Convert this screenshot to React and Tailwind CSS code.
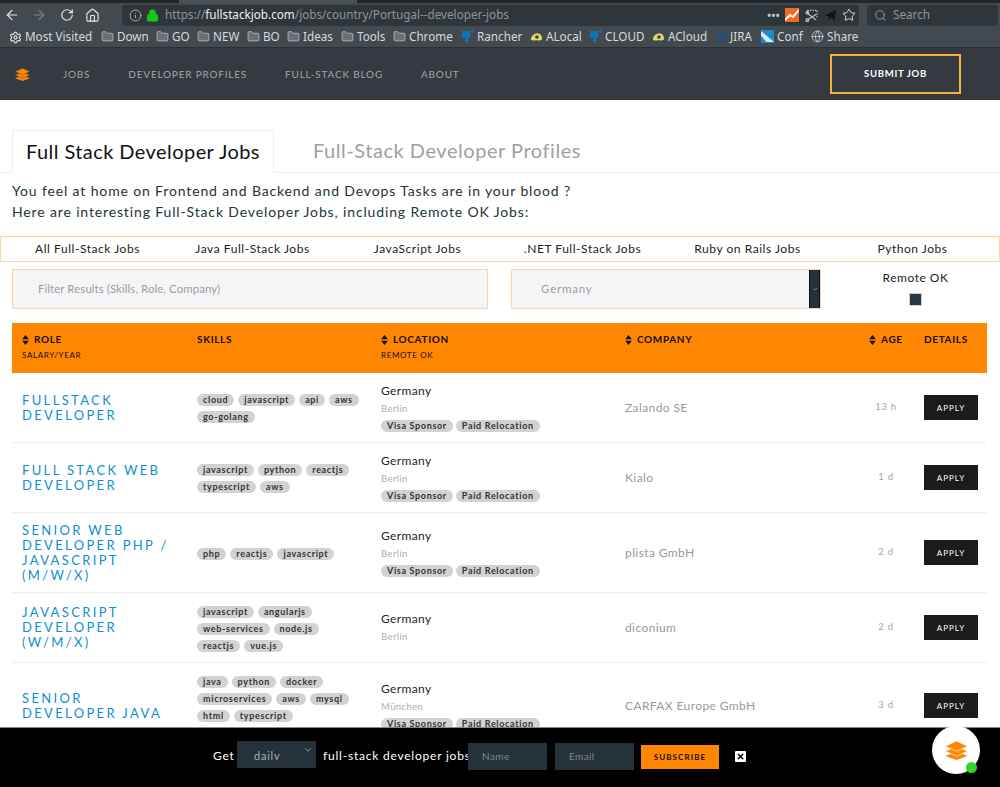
import React from "react";
import { ArrowLeft, ArrowRight, RotateCw, Home, Settings, Folder, Globe, Search, Star, Info, Lock, X, ChevronDown } from "lucide-react";

const Layers = ({ className, color = "#ff8600", line = "#fff" }) => (
    <svg viewBox="0 0 32 24" className={className}>
        <path d="M16 13 L30 19 L16 24 L2 19 Z" fill={color} />
        <path d="M16 7 L30 13 L16 19 L2 13 Z" fill={color} stroke={line} strokeWidth="0.8" />
        <path d="M16 0 L30 6.5 L16 13 L2 6.5 Z" fill={color} stroke={line} strokeWidth="0.8" />
    </svg>
);

const Sort = () => (
    <svg viewBox="0 0 8 12" className="w-[7px] h-[10px] mr-[5px] shrink-0" fill="#111">
        <path d="M4 0 L8 5 L0 5 Z M4 12 L8 7 L0 7 Z" />
    </svg>
);

const Rancher = () => (
    <svg viewBox="0 0 14 14" className="w-[13px] h-[13px] shrink-0" fill="#0f75b5">
        <path d="M1 1 H10 V8 H7.5 V13 H4.5 V8 H1 Z M11 0 H13 V3 H11 Z" />
    </svg>
);

const Avocado = () => (
    <svg viewBox="0 0 14 10" className="w-[13px] h-[10px] shrink-0">
        <path d="M1 8 C1 4 5 1 8 1 C11 1 13 4 13 7 C13 9 10 9 8 8.5 C5 8 3 9.5 1 8 Z" fill="#dcdc6e" />
        <circle cx="7.5" cy="5" r="2" fill="#5b4320" />
    </svg>
);

const Jira = () => (
    <svg viewBox="0 0 12 14" className="w-[11px] h-[13px] shrink-0" fill="none" stroke="#1c4f94" strokeWidth="2">
        <path d="M2 3 C2 7 4 7 6 8 C8 7 10 7 10 3 M3 13 C3 10 5 9 6 8 C7 9 9 10 9 13" />
        <circle cx="6" cy="2" r="1" fill="#1c4f94" stroke="none" />
    </svg>
);

const Conf = () => (
    <svg viewBox="0 0 14 14" className="w-[13px] h-[13px] shrink-0">
        <rect width="14" height="14" fill="#1a8ccb" />
        <path d="M0 1 L14 13 L6 13 L0 6 Z" fill="#d7eefa" />
    </svg>
);

const Trend = () => (
    <svg viewBox="0 0 14 14" className="w-[14px] h-[14px]">
        <rect width="14" height="14" fill="#f26a21" />
        <path d="M0 12 L5 7 L8 9 L14 2" fill="none" stroke="#fff" strokeWidth="2" />
    </svg>
);

const Screenshot = () => (
    <svg viewBox="0 0 14 14" className="w-[13px] h-[13px]" fill="none" stroke="#c5c8ca" strokeWidth="1.2">
        <path d="M3 5 V1.5 H13 V9" strokeDasharray="1.6 1.2" />
        <path d="M2 4 L12 12 M2 12 L12 6" />
        <circle cx="2.5" cy="4" r="1.4" />
        <circle cx="2.5" cy="12" r="1.4" />
    </svg>
);

const Send = () => (
    <svg viewBox="0 0 14 14" className="w-[13px] h-[13px]" fill="#111">
        <path d="M13 1 L11 13 L8 9 L5 12 L5.5 8 L1 7 Z" />
    </svg>
);

const bookmarks = [
    { label: "Down", w: "w-[55px]" },
    { label: "GO", w: "w-[41px]" },
    { label: "NEW", w: "w-[50px]" },
    { label: "BO", w: "w-[40px]" },
    { label: "Ideas", w: "w-[54px]" },
    { label: "Tools", w: "w-[52px]" },
    { label: "Chrome", w: "w-[68px]" },
];

const extras = [
    { label: "Rancher", icon: <Rancher />, w: "w-[69px]" },
    { label: "ALocal", icon: <Avocado />, w: "w-[59px]" },
    { label: "CLOUD", icon: <Rancher />, w: "w-[63px]" },
    { label: "ACloud", icon: <Avocado />, w: "w-[64px]" },
    { label: "JIRA", icon: <Jira />, w: "w-[45px]" },
    { label: "Conf", icon: <Conf />, w: "w-[50px]" },
    { label: "Share", icon: <Globe size={13} strokeWidth={1.5} color="#d3d6d8" className="shrink-0" />, w: "w-[48px]" },
];

const categories = ["All Full-Stack Jobs", "Java Full-Stack Jobs", "JavaScript Jobs", ".NET Full-Stack Jobs", "Ruby on Rails Jobs", "Python Jobs"];

const jobs = [
    { title: ["FULLSTACK", "DEVELOPER"], skills: ["cloud", "javascript", "api", "aws", "go-golang"], city: "Berlin", perks: true, company: "Zalando SE", age: "13 h", h: "h-[70px]", top: "mt-[2px]" },
    { title: ["FULL STACK WEB", "DEVELOPER"], skills: ["javascript", "python", "reactjs", "typescript", "aws"], city: "Berlin", perks: true, company: "Kialo", age: "1 d", h: "h-[70px]", top: "mt-[2px]" },
    { title: ["SENIOR WEB", "DEVELOPER PHP /", "JAVASCRIPT", "(M/W/X)"], skills: ["php", "reactjs", "javascript"], city: "Berlin", perks: true, company: "plista GmbH", age: "2 d", h: "h-[80px]", top: "mt-[2px]" },
    { title: ["JAVASCRIPT", "DEVELOPER", "(W/M/X)"], skills: ["javascript", "angularjs", "web-services", "node.js", "reactjs", "vue.js"], city: "Berlin", perks: false, company: "diconium", age: "2 d", h: "h-[70px]", top: "mt-[2px]" },
    { title: ["SENIOR", "DEVELOPER JAVA"], skills: ["java", "python", "docker", "microservices", "aws", "mysql", "html", "typescript", "continuous-integration"], city: "München", perks: true, company: "CARFAX Europe GmbH", age: "3 d", h: "h-[86px]", top: "mt-[4px]" },
];

const Pill = ({ children }) => (
    <span className="inline-block h-[12px] rounded-full bg-[#d2d2d2] px-[6px] text-[9px] leading-[12px] font-bold tracking-[0.66px] text-[#333] whitespace-nowrap">
        {children}
    </span>
);

const columns = "grid grid-cols-[175px_184px_244px_244px_55px_54px] pl-[10px]";

const App = () => {
    return (
        <div className="relative h-[787px] overflow-hidden bg-white font-['Lato',sans-serif] text-[#333]">
            {/* browser chrome */}
            <div className="h-[48px] bg-[#434a4f] font-['Noto_Sans',sans-serif] text-[11.7px] text-[#d7dadc]">
                <div className="flex h-[3px]">
                    <div className="w-[179px] bg-[#22272b]" />
                    <div className="w-[178px] bg-[#4a5156]" />
                    <div className="flex-1 bg-[#22272b]" />
                </div>
                <div className="flex h-[24px] items-center">
                    <div className="flex w-[122px] items-center pl-[4px]">
                        <ArrowLeft size={16} strokeWidth={1.8} color="#e4e6e7" />
                        <ArrowRight size={16} strokeWidth={1.8} color="#7e8488" className="ml-[11px]" />
                        <RotateCw size={14} strokeWidth={2} color="#e4e6e7" className="ml-[13px]" />
                        <Home size={15} strokeWidth={1.8} color="#e4e6e7" className="ml-[11px]" />
                    </div>
                    <div className="flex h-[21px] w-[737px] items-center rounded-[3px] bg-[#2f363b] pl-[7px] pr-[3px]">
                        <Info size={13} strokeWidth={1.6} color="#b9bdc0" />
                        <Lock size={13} strokeWidth={2.5} color="#14c814" fill="#14c814" className="ml-[4px]" />
                        <div className="ml-[6px] flex-1 text-[#8f9599]">
                            https://<span className="text-[#eceeef]">fullstackjob.com</span>/jobs/country/Portugal--developer-jobs
                        </div>
                        <span className="text-[10px] font-bold tracking-[0.5px] text-[#c5c8ca]">•••</span>
                        <span className="ml-[5px]"><Trend /></span>
                        <span className="ml-[6px]"><Screenshot /></span>
                        <span className="ml-[6px]"><Send /></span>
                        <Star size={14} strokeWidth={1.6} color="#e4e6e7" className="ml-[5px]" />
                    </div>
                    <div className="ml-[8px] flex h-[21px] w-[131px] items-center rounded-[3px] bg-[#2f363b] pl-[7px] text-[#8f9599]">
                        <Search size={13} strokeWidth={1.6} color="#9aa0a4" />
                        <span className="ml-[6px]">Search</span>
                    </div>
                </div>
                <div className="flex h-[21px] items-center border-b border-[#2b3034] pl-[9px]">
                    <Settings size={13} strokeWidth={2} color="#e4e6e7" className="shrink-0" />
                    <span className="ml-[3px] w-[76px] whitespace-nowrap">Most Visited</span>
                    {bookmarks.map((b) => (
                        <span key={b.label} className={`flex items-center gap-[3px] ${b.w}`}>
                            <Folder size={13} strokeWidth={1.2} color="#d3d6d8" fill="#6a7176" className="shrink-0" />
                            {b.label}
                        </span>
                    ))}
                    {extras.map((b) => (
                        <span key={b.label} className={`flex items-center gap-[3px] whitespace-nowrap ${b.w}`}>
                            {b.icon}
                            {b.label}
                        </span>
                    ))}
                </div>
            </div>

            {/* navbar */}
            <div className="flex h-[52px] items-center bg-[#343a40] text-[10px] tracking-[0.8px] text-[#a3a6a9]">
                <Layers className="ml-[14px] h-[13px] w-[17px]" line="#343a40" />
                <span className="ml-[32px]">JOBS</span>
                <span className="ml-[38px]">DEVELOPER PROFILES</span>
                <span className="ml-[38px]">FULL-STACK BLOG</span>
                <span className="ml-[38px]">ABOUT</span>
                <div className="ml-auto mr-[39px] flex h-[40px] w-[131px] items-center justify-center border-2 border-[#f6b23e] text-[9.5px] font-bold tracking-[0.7px] text-white">
                    SUBMIT JOB
                </div>
            </div>

            {/* tabs */}
            <div className="mt-[30px] flex h-[43px] items-end border-b border-[#eceeef] pl-[12px]">
                <div className="-mb-px flex h-[43px] w-[262px] items-center border border-b-white border-[#eceeef] bg-white pb-[2px] pl-[13px] text-[20px] tracking-[0.43px] text-[#111]">
                    Full Stack Developer Jobs
                </div>
                <div className="flex h-[42px] items-center pb-[2px] pl-[39px] text-[20px] tracking-[0.54px] text-[#a0a0a0]">
                    Full-Stack Developer Profiles
                </div>
            </div>

            <div className="mt-[7px] pl-[12px] text-[14px] leading-[21px] tracking-[0.86px] text-[#22343a]">
                <div>You feel at home on Frontend and Backend and Devops Tasks are in your blood ?</div>
                <div>Here are interesting Full-Stack Developer Jobs, including Remote OK Jobs:</div>
            </div>

            {/* categories */}
            <div className="mt-[14px] grid h-[26px] grid-cols-6 items-center border border-[#fbd5a5] px-[4px] text-[12px] tracking-[0.54px] text-[#222]">
                {categories.map((c) => (
                    <span key={c} className="text-center">{c}</span>
                ))}
            </div>

            {/* filters */}
            <div className="mt-[7px] flex h-[40px] pl-[12px]">
                <div className="flex w-[476px] items-center border border-[#fbd5a5] bg-[#f5f5f8] pl-[25px] text-[11.5px] tracking-[0.05px] text-[#9b9ea3]">
                    Filter Results (Skills, Role, Company)
                </div>
                <div className="ml-[23px] flex w-[310px] items-center border border-[#fbd5a5] bg-[#f5f5f8] pl-[29px] text-[11.5px] tracking-[0.8px] text-[#9b9ea3]">
                    <span className="flex-1">Germany</span>
                    <span className="flex h-full w-[11px] items-center justify-center border-x border-[#111] bg-[#25323a]">
                        <ChevronDown size={8} color="#9aa4aa" />
                    </span>
                </div>
                <div className="ml-[37px] flex w-[115px] flex-col items-center text-[12px] tracking-[0.5px] text-[#222]">
                    <span className="leading-[17px]">Remote OK</span>
                    <span className="mt-[7px] h-[13px] w-[13px] border border-[#c6d0d8] bg-[#2a3a45]" />
                </div>
            </div>

            {/* table */}
            <div className="mx-[12px] mt-[14px] w-[975px]">
                <div className={`${columns} h-[50px] bg-[#ff8600] pt-[10px] text-[10px] font-bold tracking-[0.65px] text-[#111]`}>
                    <div>
                        <div className="flex items-center leading-[13px]"><Sort />ROLE</div>
                        <div className="mt-[3px] text-[8px] font-normal">SALARY/YEAR</div>
                    </div>
                    <div className="leading-[13px]">SKILLS</div>
                    <div>
                        <div className="flex items-center leading-[13px]"><Sort />LOCATION</div>
                        <div className="mt-[3px] text-[8px] font-normal">REMOTE OK</div>
                    </div>
                    <div className="flex h-[13px] items-center"><Sort />COMPANY</div>
                    <div className="flex h-[13px] items-center"><Sort />AGE</div>
                    <div className="leading-[13px]">DETAILS</div>
                </div>

                {jobs.map((job) => (
                    <div key={job.company} className={`${columns} ${job.h} items-center border-b border-[#eeeeee]`}>
                        <div className="text-[13px] leading-[15px] tracking-[2.35px] text-[#0e8fd0]">
                            {job.title.map((t) => (
                                <div key={t} className="whitespace-nowrap">{t}</div>
                            ))}
                        </div>
                        <div className={`flex w-[165px] flex-wrap gap-x-[4px] gap-y-[5px] ${job.top}`}>
                            {job.skills.map((s) => (
                                <Pill key={s}>{s}</Pill>
                            ))}
                        </div>
                        <div>
                            <div className="-mt-[1px] text-[12px] leading-[16px] tracking-[0.35px] text-[#222]">Germany</div>
                            <div className="mt-[3px] text-[9.5px] leading-[14px] tracking-[0.4px] text-[#a9aeb3]">{job.city}</div>
                            {job.perks && (
                                <div className="mt-[4px] flex gap-[3px]">
                                    <Pill>Visa Sponsor</Pill>
                                    <Pill>Paid Relocation</Pill>
                                </div>
                            )}
                        </div>
                        <div className="text-[12px] tracking-[0.4px] text-[#949aa0]">{job.company}</div>
                        <div className="w-[34px] text-center text-[9.5px] tracking-[0.7px] text-[#a0a5aa]">{job.age}</div>
                        <div className="flex h-[25px] items-center justify-center bg-[#1b1b1b] text-[8px] tracking-[1px] text-white">APPLY</div>
                    </div>
                ))}
            </div>

            {/* subscribe bar */}
            <div className="fixed bottom-0 left-0 flex h-[60px] w-[1000px] border-t border-[#888] bg-black pl-[213px] text-[12px] tracking-[0.78px] text-white">
                <span className="mt-[20px] w-[19px] leading-[16px]">Get</span>
                <div className="ml-[5px] mt-[13px] flex h-[27px] w-[79px] bg-[#25323a] pl-[17px] pr-[3px] text-[11px] text-[#a8adb1]">
                    <span className="mt-[7px] h-[12px] flex-1 overflow-hidden leading-[15px]">daily</span>
                    <ChevronDown size={10} color="#a8adb1" className="mt-[4px]" />
                </div>
                <span className="ml-[7px] mt-[20px] w-[145px] whitespace-nowrap leading-[16px]">full-stack developer jobs</span>
                <div className="mt-[15px] flex h-[27px] w-[79px] items-center bg-[#25323a] pl-[14px] text-[10px] tracking-[0.4px] text-[#7f878c]">Name</div>
                <div className="ml-[8px] mt-[15px] flex h-[27px] w-[79px] items-center bg-[#25323a] pl-[14px] text-[10px] tracking-[0.4px] text-[#7f878c]">Email</div>
                <div className="ml-[7px] mt-[17px] flex h-[24px] w-[78px] items-center justify-center bg-[#ff8600] text-[8px] font-bold tracking-[1.1px] text-[#111]">SUBSCRIBE</div>
                <div className="ml-[16px] mt-[23px] flex h-[11px] w-[11px] items-center justify-center rounded-[1px] bg-white">
                    <X size={9} strokeWidth={4} color="#000" />
                </div>
            </div>

            {/* chat bubble */}
            <div className="fixed left-[932px] top-[726px] flex h-[48px] w-[48px] items-center justify-center rounded-full bg-white">
                <Layers className="h-[19px] w-[29px]" />
                <span className="absolute left-[34px] top-[36px] h-[11px] w-[11px] rounded-full bg-[#35d62a]" />
            </div>
        </div>
    );
};

export default App;
